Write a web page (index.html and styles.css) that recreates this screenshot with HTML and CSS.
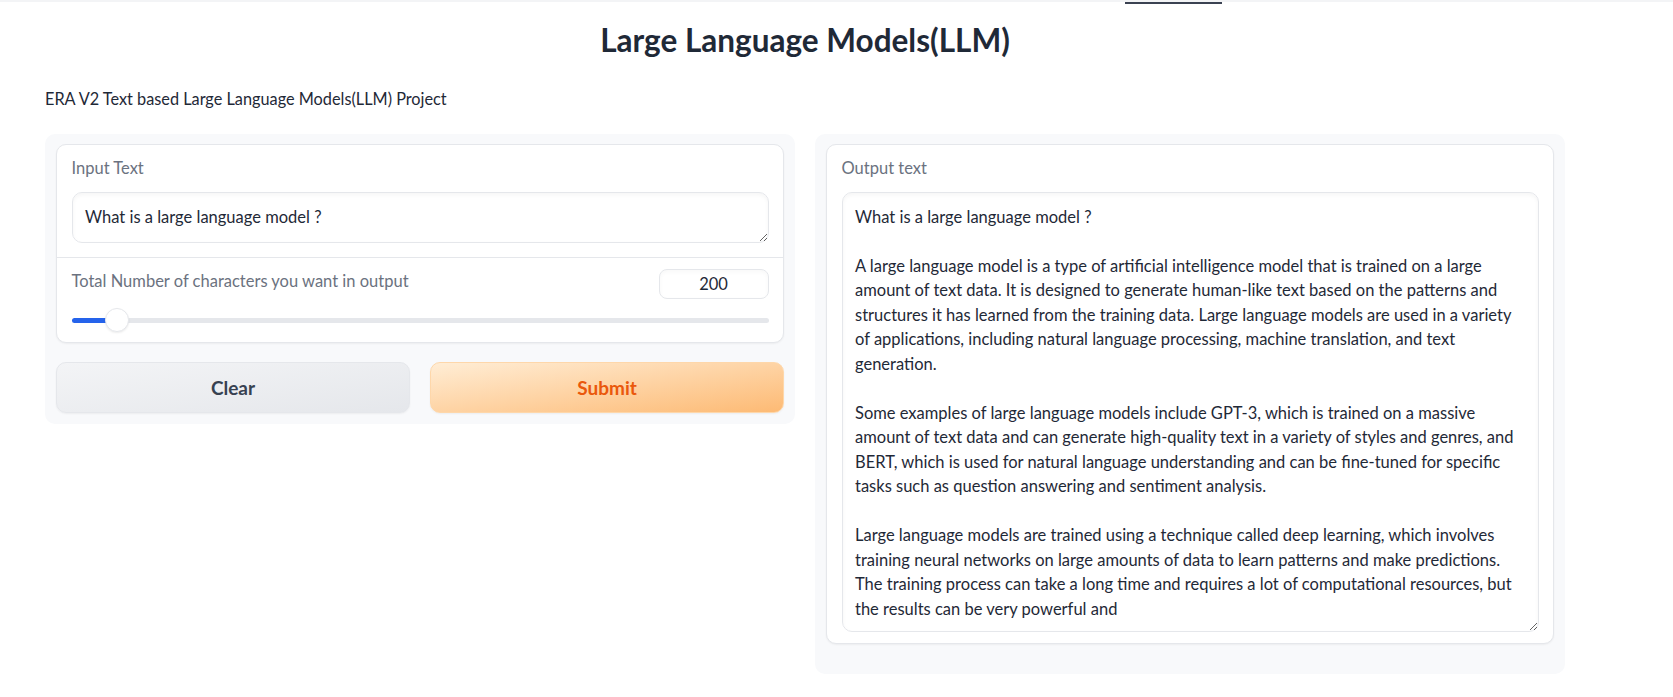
FILE: index.html
```html
<!DOCTYPE html>
<html lang="en">
<head>
<meta charset="utf-8">
<title>Large Language Models(LLM)</title>
<link rel="stylesheet" href="styles.css">
</head>
<body>
<div class="top-strip"></div>
<div class="tab-indicator"></div>
<main class="app">
  <h1 class="title">Large Language Models(LLM)</h1>
  <p class="subtitle">ERA V2 Text based Large Language Models(LLM) Project</p>
  <div class="row">
    <section class="panel panel-input">
      <div class="form">
        <div class="block block-text">
          <label class="block-label" for="input-text">Input Text</label>
          <textarea id="input-text" class="textbox textbox-input" rows="1">What is a large language model ?</textarea>
        </div>
        <div class="block block-slider">
          <div class="slider-head">
            <span class="block-label">Total Number of characters you want in output</span>
            <input class="number" type="number" value="200">
          </div>
          <input class="range" type="range" min="0" max="4000" value="200" style="--fill: 5%">
        </div>
      </div>
      <div class="buttons">
        <button class="btn btn-secondary">Clear</button>
        <button class="btn btn-primary">Submit</button>
      </div>
    </section>
    <section class="panel panel-output">
      <div class="form">
        <div class="block">
          <label class="block-label" for="output-text">Output text</label>
          <textarea id="output-text" class="textbox textbox-output" wrap="off">
What is a large language model ?

A large language model is a type of artificial intelligence model that is trained on a large
amount of text data. It is designed to generate human-like text based on the patterns and
structures it has learned from the training data. Large language models are used in a variety
of applications, including natural language processing, machine translation, and text
generation.

Some examples of large language models include GPT-3, which is trained on a massive
amount of text data and can generate high-quality text in a variety of styles and genres, and
BERT, which is used for natural language understanding and can be fine-tuned for specific
tasks such as question answering and sentiment analysis.

Large language models are trained using a technique called deep learning, which involves
training neural networks on large amounts of data to learn patterns and make predictions.
The training process can take a long time and requires a lot of computational resources, but
the results can be very powerful and</textarea>
        </div>
      </div>
    </section>
  </div>
</main>
</body>
</html>
```
FILE: styles.css
```css
* { box-sizing: border-box; }

body {
  margin: 0;
  background: #ffffff;
  font-family: Lato, "Noto Sans", sans-serif;
  color: #1f2937;
}

.top-strip {
  height: 2px;
  background: #f3f4f6;
}

.tab-indicator {
  margin-left: 1125px;
  width: 97px;
  height: 2px;
  background: #3b4252;
}

.app {
  width: 1520px;
  margin-left: 45px;
}

.title {
  margin: 17px 0 0;
  text-align: center;
  font-size: 31.5px;
  line-height: 39px;
  font-weight: 700;
  color: #1f2937;
}

.subtitle {
  margin: 27px 0 0;
  font-size: 16.3px;
  line-height: 24.5px;
  color: #1f2937;
}

.row {
  display: flex;
  align-items: flex-start;
  gap: 20px;
  margin-top: 22px;
}

.panel {
  flex: 1;
  background: #f8f9fb;
  border-radius: 10px;
  padding: 10px 11px 11px;
}

.panel-output {
  padding-bottom: 30px;
}

.form {
  background: #ffffff;
  border: 1px solid #e5e7eb;
  border-radius: 10px;
  overflow: hidden;
  box-shadow: 0 1px 2px rgba(0, 0, 0, 0.05);
}

.block {
  padding: 11.5px 14.5px;
}

.block-text {
  padding-bottom: 14px;
}

.block + .block {
  border-top: 1px solid #e5e7eb;
}

.block-label {
  display: block;
  font-size: 16.5px;
  line-height: 24.5px;
  color: #6b7280;
  margin-bottom: 11px;
}

.textbox {
  display: block;
  width: 100%;
  border: 1px solid #e5e7eb;
  border-radius: 10px;
  padding: 12px 12.5px;
  font-family: inherit;
  font-size: 16.5px;
  line-height: 24.5px;
  color: #1f2937;
  background: #ffffff;
  box-shadow: inset 0 2px 4px rgba(0, 0, 0, 0.04);
  resize: vertical;
  outline: none;
}

.textbox-input {
  height: 51px;
  overflow: hidden;
}

.textbox-output {
  height: 440px;
  overflow: hidden;
  white-space: pre;
}

.block-slider {
  padding-bottom: 9.5px;
}

.slider-head {
  display: flex;
  justify-content: space-between;
  align-items: flex-start;
}

.slider-head .block-label {
  margin-bottom: 0;
}

.number {
  width: 110px;
  height: 30px;
  border: 1px solid #e5e7eb;
  border-radius: 8px;
  font-family: inherit;
  font-size: 16.5px;
  color: #1f2937;
  text-align: center;
  background: #ffffff;
  box-shadow: inset 0 2px 4px rgba(0, 0, 0, 0.03);
  outline: none;
  -moz-appearance: textfield;
}

.number::-webkit-outer-spin-button,
.number::-webkit-inner-spin-button {
  -webkit-appearance: none;
  margin: 0;
}

.range {
  -webkit-appearance: none;
  appearance: none;
  display: block;
  width: 100%;
  height: 24px;
  margin: 9px 0 0;
  background: transparent;
}

.range::-webkit-slider-runnable-track {
  height: 5px;
  border-radius: 3px;
  background: linear-gradient(to right, #2563eb 0, #2563eb var(--fill), #e5e7eb var(--fill), #e5e7eb 100%);
}

.range::-webkit-slider-thumb {
  -webkit-appearance: none;
  appearance: none;
  width: 24px;
  height: 24px;
  margin-top: -9.5px;
  border-radius: 50%;
  background: #ffffff;
  border: 1px solid #e5e7eb;
  box-shadow: 0 1px 2px rgba(0, 0, 0, 0.08);
}

.buttons {
  display: flex;
  gap: 20px;
  margin-top: 19px;
}

.btn {
  flex: 1;
  height: 51px;
  border-radius: 10px;
  font-family: inherit;
  font-size: 19px;
  font-weight: 700;
  cursor: pointer;
  box-shadow: 0 1px 2px rgba(0, 0, 0, 0.05);
}

.btn-secondary {
  background: linear-gradient(to bottom right, #f3f4f6, #e5e7eb);
  border: 1px solid #e5e7eb;
  color: #374151;
}

.btn-primary {
  background: linear-gradient(to bottom right, #ffedd5, #fdba74);
  border: 1px solid #fed7aa;
  color: #ea580c;
}
```
